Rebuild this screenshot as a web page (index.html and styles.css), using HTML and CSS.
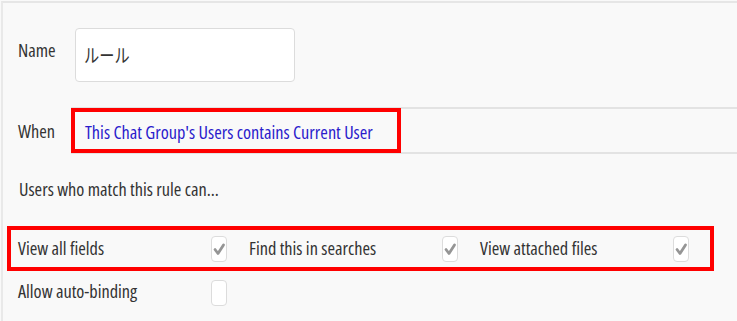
FILE: index.html
```html
<!DOCTYPE html>
<html>
<head>
<meta charset="utf-8">
<link rel="stylesheet" href="styles.css">
</head>
<body>
<div class="panel">
  <div class="row name-row">
    <span class="lbl">Name</span>
    <div class="text-input"><span class="jp">ルール</span></div>
  </div>
  <div class="row when-row">
    <span class="lbl">When</span>
    <div class="when-field">
      <div class="hl hl-when"><span class="cond">This Chat Group's Users contains Current User</span></div>
    </div>
  </div>
  <div class="hint">Users who match this rule can...</div>
  <div class="perms hl hl-perms">
    <div class="perm"><span class="perm-lbl">View all fields</span><span class="cb checked"><svg viewBox="0 0 16 26" width="16" height="26"><path d="M4 13.5 L7 17.5 L12.5 9" fill="none" stroke="#959595" stroke-width="2.8" stroke-linecap="round" stroke-linejoin="round"/></svg></span></div>
    <div class="perm"><span class="perm-lbl">Find this in searches</span><span class="cb checked"><svg viewBox="0 0 16 26" width="16" height="26"><path d="M4 13.5 L7 17.5 L12.5 9" fill="none" stroke="#959595" stroke-width="2.8" stroke-linecap="round" stroke-linejoin="round"/></svg></span></div>
    <div class="perm"><span class="perm-lbl">View attached files</span><span class="cb checked"><svg viewBox="0 0 16 26" width="16" height="26"><path d="M4 13.5 L7 17.5 L12.5 9" fill="none" stroke="#959595" stroke-width="2.8" stroke-linecap="round" stroke-linejoin="round"/></svg></span></div>
  </div>
  <div class="perms perms-plain">
    <div class="perm"><span class="perm-lbl">Allow auto-binding</span><span class="cb"></span></div>
  </div>
</div>
</body>
</html>
```
FILE: styles.css
```css
html, body {
  margin: 0;
  padding: 0;
  background: #f9f9f9;
}
body {
  font-family: "Open Sans", "Noto Sans CJK JP", sans-serif;
  font-stretch: 75%;
  font-weight: 380;
  font-size: 18.3px;
  color: #333;
  width: 737px;
  height: 321px;
  overflow: hidden;
}
.panel {
  margin: 1px 0 0 1px;
  border-top: 2px solid #e6e6e6;
  border-left: 2px solid #e9e9e9;
  height: 330px;
  box-sizing: border-box;
  padding-top: 25px;
}
.row {
  display: flex;
  align-items: flex-start;
}
.lbl {
  width: 57px;
  padding-left: 15px;
  flex: none;
  line-height: 22px;
}
.name-row .lbl {
  padding-top: 11px;
}
.text-input {
  width: 220px;
  height: 54px;
  box-sizing: border-box;
  background: #fff;
  border: 1px solid #dcdcdc;
  border-radius: 4px;
  padding: 14px 0 0 8px;
  line-height: 24px;
}
.jp {
  display: inline-block;
  font-family: "Noto Sans CJK JP", sans-serif;
  font-stretch: normal;
  font-weight: 400;
  font-size: 19px;
  color: #333;
  transform: scaleX(0.8);
  transform-origin: left center;
}
.when-row {
  margin-top: 25px;
}
.when-row .lbl {
  width: 53px;
  padding-top: 13px;
}
.when-field {
  flex: 1;
  height: 47px;
  box-sizing: border-box;
  border-top: 2px solid #e3e3e3;
  border-bottom: 2px solid #e3e3e3;
}
.hl {
  border: 4px solid #ff0000;
  box-sizing: border-box;
}
.hl-when {
  width: 330px;
  height: 45px;
  margin-top: -1px;
  padding: 7px 0 0 10px;
}
.cond {
  color: #2a1bcc;
  line-height: 24px;
}
.hint {
  padding: 23px 0 0 16px;
  line-height: 24px;
}
.perms {
  display: flex;
}
.hl-perms {
  margin: 25px 0 0 4px;
  width: 707px;
  height: 45px;
  padding: 1px 0 0 7px;
}
.perm {
  width: 231px;
  display: flex;
  align-items: center;
  flex: none;
}
.perm-lbl {
  width: 193px;
  flex: none;
  line-height: 26px;
  margin-top: -3px;
}
.cb {
  width: 16px;
  height: 26px;
  box-sizing: border-box;
  border: 1px solid #dcdcdc;
  border-radius: 4px;
  background: #fff;
  display: flex;
}
.cb svg {
  display: block;
  margin: -1px;
}
.perms-plain {
  padding: 6px 0 0 15px;
}
.perms-plain .perm-lbl {
  margin-top: -1px;
}
.perms-plain .cb {
  margin-top: 3px;
}
```
